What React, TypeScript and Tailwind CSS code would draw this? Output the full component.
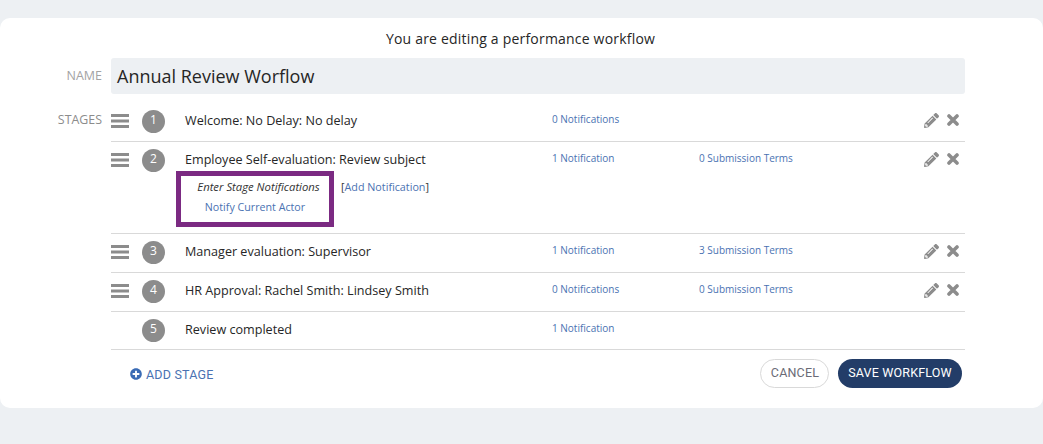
import { FaPencilAlt, FaPlusCircle } from "react-icons/fa";

interface Stage {
  num: number;
  name: string;
  notifications: string;
  terms?: string;
  editable: boolean;
  h: string;
}

const stages: Stage[] = [
  { num: 1, name: "Welcome: No Delay: No delay", notifications: "0 Notifications", editable: true, h: "h-[39px]" },
  { num: 2, name: "Employee Self-evaluation: Review subject", notifications: "1 Notification", terms: "0 Submission Terms", editable: true, h: "h-[92px]" },
  { num: 3, name: "Manager evaluation: Supervisor", notifications: "1 Notification", terms: "3 Submission Terms", editable: true, h: "h-[39px]" },
  { num: 4, name: "HR Approval: Rachel Smith: Lindsey Smith", notifications: "0 Notifications", terms: "0 Submission Terms", editable: true, h: "h-[39px]" },
  { num: 5, name: "Review completed", notifications: "1 Notification", editable: false, h: "h-[38px]" },
];

function Handle() {
  return (
    <svg width="18" height="14" viewBox="0 0 18 14" className="block">
      <rect x="0" y="0" width="18" height="3" fill="#8c8c8c" />
      <rect x="0" y="5.5" width="18" height="3" fill="#8c8c8c" />
      <rect x="0" y="11" width="18" height="3" fill="#8c8c8c" />
    </svg>
  );
}

function RemoveIcon() {
  return (
    <svg width="12" height="12" viewBox="0 0 12 12" className="block">
      <path d="M2 2 L10 10 M10 2 L2 10" stroke="#8c8c8c" strokeWidth="3.6" strokeLinecap="round" />
    </svg>
  );
}

function StageRow({ stage }: { stage: Stage }) {
  return (
    <div className={`${stage.h} border-b border-[#d9d9d9]`}>
      <div className="flex h-[36px] items-center">
        <div className="w-[31px]">{stage.editable && <Handle />}</div>
        <div className="flex h-[23px] w-[23px] items-center justify-center rounded-full bg-[#8c8c8c] pb-[2px] text-[12px] text-white">
          {stage.num}
        </div>
        <div className="ml-[20px] w-[367px] text-[12.6px] text-[#262626]">{stage.name}</div>
        <div className="w-[147px] pb-[3px] text-[10px] text-[#4a72b2]">{stage.notifications}</div>
        <div className="w-[225px] pb-[3px] text-[10px] text-[#4a72b2]">{stage.terms}</div>
        {stage.editable && (
          <div className="flex items-center pb-[2px] text-[#8c8c8c]">
            <FaPencilAlt className="h-[15px] w-[15px]" />
            <div className="ml-[8px]">
              <RemoveIcon />
            </div>
          </div>
        )}
      </div>
      {stage.num === 2 && (
        <div className="ml-[65px] -mt-[7px] flex items-start">
          <div className="h-[56px] w-[158px] border-[5px] border-[#7b2a82] text-center">
            <div className="mt-[3px] pl-[7px] text-[11.3px] italic text-[#333333]">Enter Stage Notifications</div>
            <div className="mt-[3px] text-[10.7px] text-[#4a72b2]">Notify Current Actor</div>
          </div>
          <div className="ml-[7px] mt-[8px] text-[10.75px] text-[#333333]">
            [<span className="text-[#4a72b2]">Add Notification</span>]
          </div>
        </div>
      )}
    </div>
  );
}

export default function App() {
  return (
    <div className="h-[444px] overflow-hidden bg-[#edf0f3] pt-[18px] font-['Open_Sans',sans-serif]">
      <div className="h-[390px] rounded-[10px] bg-white">
        <div className="pr-[2px] pt-[11px] text-center text-[14px] leading-[20px] tracking-[0.2px] text-[#262626]">
          You are editing a performance workflow
        </div>
        <div className="mt-[9px] flex">
          <div className="w-[102px] pt-[9px] text-right text-[12.5px] text-[#a3a3a3]">NAME</div>
          <div className="ml-[9px] flex h-[36px] w-[854px] items-center rounded-[3px] bg-[#edf0f3] px-[6px] text-[18px] text-[#262626]">
            Annual Review Worflow
          </div>
        </div>
        <div className="mt-[9px] flex">
          <div className="w-[102px] pt-[8px] text-right text-[12.4px] text-[#8c8c8c]">STAGES</div>
          <div className="ml-[9px] w-[854px]">
            {stages.map((s) => (
              <StageRow key={s.num} stage={s} />
            ))}
            <div className="mt-[9px] flex items-center pl-[19px] pr-[3px] font-['Roboto',sans-serif]">
              <FaPlusCircle className="mt-[1px] h-[12px] w-[12px] text-[#3a6bb5]" />
              <div className="ml-[4px] pt-[4px] text-[12.5px] tracking-[0.2px] text-[#4a72b2]">ADD STAGE</div>
              <button className="ml-auto h-[29px] w-[69px] rounded-full border border-[#d9d9d9] pl-[1px] text-[12.5px] tracking-[0.2px] text-[#6b6b76]">
                CANCEL
              </button>
              <button className="ml-[9px] h-[29px] w-[124px] rounded-full bg-[#233d68] text-[12.5px] tracking-[0.18px] text-white">
                SAVE WORKFLOW
              </button>
            </div>
          </div>
        </div>
      </div>
    </div>
  );
}
